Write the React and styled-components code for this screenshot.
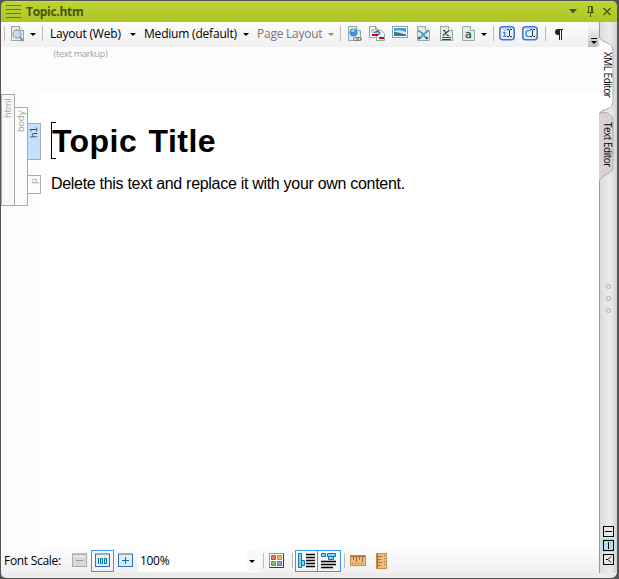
import React from "react";
import styled, { createGlobalStyle } from "styled-components";

const Global = createGlobalStyle`
  * { box-sizing: border-box; }
  html, body { margin: 0; background: #555557; overflow: hidden; }
  svg { display: block; flex: none; overflow: visible; }
`;

const Window = styled.div`
  width: 619px;
  height: 579px;
  padding: 1px 2px 1px 1px;
  background: #555557;
  display: flex;
  flex-direction: column;
  font-family: "Open Sans", sans-serif;
  font-size: 12px;
  color: #000;
`;

const TitleBar = styled.header`
  height: 21px;
  flex: none;
  display: flex;
  align-items: center;
  padding: 0 6px 0 5px;
  border-radius: 5px 5px 0 0;
  background: linear-gradient(#bdd333, #adc527);
  border-top: 1px solid #c8d950;
`;

const Title = styled.h1`
  margin: 0 auto 0 5px;
  font: bold 12px/20px "Open Sans", sans-serif;
  letter-spacing: -0.3px;
  color: #4a5608;
`;

const Body = styled.div`
  height: 556px;
  display: flex;
  background: #ebebeb;
  border-radius: 0 0 6px 5px;
  overflow: hidden;
`;

const Main = styled.main`
  width: 598px;
  display: flex;
  flex-direction: column;
`;

const Toolbar = styled.div`
  height: 25px;
  flex: none;
  display: flex;
  align-items: flex-start;
  background: linear-gradient(#fdfdfd, #f0f0f0);
`;

const Slot = styled.div`
  width: ${(p) => p.$w}px;
  flex: none;
  display: flex;
  align-items: center;
  height: 23px;
  padding-top: ${(p) => p.$drop || 0}px;
  padding-bottom: ${(p) => p.$lift || 0}px;
`;

const Label = styled.span`
  white-space: nowrap;
  font-size: 12px;
  line-height: 19px;
  letter-spacing: ${(p) => p.$track || 0}px;
  color: ${(p) => (p.$muted ? "#777" : "#000")};
`;

const Divider = styled.div`
  width: 1px;
  height: 15px;
  background: #bcbcbc;
`;

const Caret = styled.div`
  width: 0;
  height: 0;
  margin-top: 2px;
  border: 3px solid transparent;
  border-top: 3px solid ${(p) => (p.$muted ? "#888" : "#000")};
  border-bottom: 0;
`;

const Overflow = styled.div`
  width: 11px;
  height: 25px;
  margin-left: auto;
  border-radius: 0 0 4px 0;
  background: linear-gradient(#f6f6f6 20%, #bcbcbc);
  display: flex;
  align-items: flex-end;
  justify-content: center;
  padding-bottom: 3px;
`;

const Editor = styled.div`
  height: 502px;
  flex: none;
  display: flex;
  background: #fcfcfc;
`;

const Gutter = styled.div`
  width: 40px;
  padding-top: 47px;
  display: flex;
  align-items: flex-start;
`;

const TagColumn = styled.div`
  width: 14px;
  margin-right: -1px;
  margin-top: ${(p) => p.$top}px;
  display: flex;
  flex-direction: column;
  gap: 15px;
`;

const Tag = styled.div`
  height: ${(p) => p.$h}px;
  border: 1px solid #aaa;
  background: ${(p) => p.$bg || "#fcfcfc"};
  color: ${(p) => p.$color || "#aaa"};
  writing-mode: vertical-rl;
  transform: rotate(180deg);
  display: flex;
  justify-content: flex-end;
  align-items: center;
  padding-bottom: 3px;
  font: 9px/12px "DejaVu Sans", sans-serif;
  letter-spacing: -0.25px;
`;

const Page = styled.div`
  width: 558px;
`;

const Markup = styled.div`
  height: 45px;
  padding: 0 0 0 12px;
  font: 9px/14px "DejaVu Sans", sans-serif;
  letter-spacing: -0.57px;
  color: #aaa;
`;

const Paper = styled.div`
  height: 457px;
  background: #fff;
  padding: 30px 0 0 10px;
  font-family: "Liberation Sans", Arial, sans-serif;
`;

const HeadingRow = styled.div`
  height: 37px;
  display: flex;
  align-items: flex-start;
`;

const Bracket = styled.div`
  width: 5px;
  height: 37px;
  margin-right: -4px;
  border: 1px solid #000;
  border-right: 0;
`;

const Heading = styled.h2`
  margin: 1px 0 0;
  font: bold 32px/37px "Liberation Sans", Arial, sans-serif;
  letter-spacing: 0.45px;
  word-spacing: 2px;
  white-space: nowrap;
`;

const Paragraph = styled.p`
  margin: 15px 0 0;
  font-size: 16px;
  line-height: 19px;
  letter-spacing: -0.3px;
  white-space: nowrap;
`;

const StatusBar = styled.footer`
  height: 24px;
  flex: none;
  display: flex;
  align-items: flex-start;
  background: linear-gradient(#fcfcfc, #f0f0f0);
  padding-left: 3px;
`;

const Toggle = styled.div`
  width: ${(p) => p.$w || 23}px;
  height: 22px;
  margin-top: 1px;
  margin-right: ${(p) => p.$mr || 0}px;
  border: 1px solid ${(p) => (p.$on ? "#3399ff" : "transparent")};
  display: flex;
  align-items: flex-start;
  justify-content: center;
  padding-top: 2px;
  flex: none;
`;

const ScaleField = styled.div`
  width: 122px;
  height: 23px;
  padding-left: 2px;
  background: #fff;
  display: flex;
  align-items: center;
  margin-right: 3px;
`;

const ScaleDrop = styled.div`
  width: 13px;
  height: 21px;
  margin-left: auto;
  padding-right: 3px;
  background: #f9f9f9;
  display: flex;
  align-items: center;
  justify-content: center;
`;

const Rail = styled.aside`
  width: 18px;
  height: 551px;
  border-left: 1px solid #999;
  background: linear-gradient(90deg, #dcdcdc, #ececec 60%, #d2d2d2);
  display: flex;
  flex-direction: column;
`;

const TabStack = styled.div`
  height: 262px;
  flex: none;
  display: grid;
  grid-template-columns: 17px;
  grid-template-rows: 91px 171px;
`;

const Tab = styled.div`
  writing-mode: vertical-rl;
  position: relative;
  padding-top: ${(p) => p.$pad}px;
  padding-right: 2px;
  font: 10px/15px "Open Sans", sans-serif;
  letter-spacing: ${(p) => p.$track}px;
  white-space: nowrap;
  color: #000;
  z-index: ${(p) => p.$z};
`;

const TabShape = styled.svg`
  position: absolute;
  left: -1px;
  top: ${(p) => p.$top}px;
  z-index: -1;
`;

const Grips = styled.div`
  padding-left: 6px;
  display: flex;
  flex-direction: column;
  gap: 7px;
`;

const Grip = styled.div`
  width: 5px;
  height: 5px;
  border: 1px solid #aaa;
  border-radius: 50%;
`;

const SplitModes = styled.div`
  margin-top: auto;
  padding: 0 0 7px 1px;
  display: flex;
  flex-direction: column;
`;

const SplitMode = styled.div`
  width: 14px;
  height: 14px;
  padding: 2px 0 0 2px;
  background: ${(p) => (p.$on ? "#b0e0e6" : "transparent")};
`;

const Doc = ({ children }) => (
  <svg width="13" height="15" viewBox="0 0 13 15">
    <path d="M.5.5h8l4 4v10H.5z" fill="#e4ece9" stroke="#91aaa5" />
    <path d="M8.5.5v4h4" fill="#fff" stroke="#91aaa5" />
    {children}
  </svg>
);

const MenuIcon = () => (
  <svg width="15" height="14" viewBox="0 0 15 14">
    <path d="M0 .5h15M0 4.5h15M0 8.5h15M0 12.5h15" stroke="#68761a" />
  </svg>
);

const SearchDoc = () => (
  <Doc>
    <circle cx="6" cy="8" r="4" fill="#c9dbea" stroke="#9eabb0" strokeWidth="1.4" />
    <path d="M9 11l3 4" stroke="#77858a" strokeWidth="2" />
  </Doc>
);

const LinkDoc = () => (
  <Doc>
    <circle cx="5.500" cy="6.500" r="4" fill="#3d93d6" />
    <path d="M3 5.500q1-3 4-2Q7 7 3 5.500" fill="#a2d7f5" />
    <rect x="5.500" y="11.500" width="5" height="3" rx="1.500" fill="#eee" stroke="#81818a" />
    <rect x="8.500" y="11.500" width="5" height="3" rx="1.500" fill="none" stroke="#81818a" />
  </Doc>
);

const CrossRefDocs = () => (
  <svg width="17" height="15" viewBox="0 0 17 15">
    <path d="M.5.5h6l3 3v8h-9z" fill="#f2f6f4" stroke="#91aaa5" />
    <path d="M6.5.5v3h3M2 4h4M2 6h3" fill="none" stroke="#91aaa5" />
    <path d="M7.5 4.500h5l3 3v7h-8z" fill="#f2f6f4" stroke="#91aaa5" />
    <path d="M5 7q3-3 6 0M9 5l2 2-2 2" fill="none" stroke="#3864c4" strokeWidth="1.200" />
    <path d="M3 9h6M10 12h5" stroke="#d70000" strokeWidth="2" />
  </svg>
);

const PictureIcon = () => (
  <svg width="16" height="12" viewBox="0 0 16 12">
    <rect x=".5" y=".5" width="15" height="11" fill="#fff" stroke="#8aa09f" />
    <path d="M2 2h12v8H2z" fill="#4c98dc" />
    <path d="M2 5q5-2 12 1v2H2z" fill="#d5eff8" />
    <path d="M2 6q5 0 12 3v1H2z" fill="#337d82" />
  </svg>
);

const ShuffleDoc = () => (
  <Doc>
    <path d="M1 4.500l4 2.500 5 6M11.500 4.500L7 8l-5 5" fill="none" stroke="#54a0b7" strokeWidth="2" />
    <path d="M1 12.500l2-1M11 12.500l-2-1" stroke="#3b6070" strokeWidth="2" />
  </Doc>
);

const VariableDoc = () => (
  <Doc>
    <path d="M3 4.500h1.500l3 5H9M9 4.500L3 9.500" fill="none" stroke="#3c4443" strokeWidth="1.200" />
    <path d="M2 11.500h9M2 13.500h9" stroke="#3c4443" />
  </Doc>
);

const LetterDoc = () => (
  <Doc>
    <text x="6.300" y="12" textAnchor="middle" fontFamily="DejaVu Sans" fontSize="11" fill="#303839" stroke="#505758" strokeWidth=".3">a</text>
  </Doc>
);

const InlineBadge = ({ letter }) => (
  <svg width="16" height="15" viewBox="0 0 16 15">
    <rect x=".8" y=".8" width="14.400" height="12.900" rx="3" fill="#e3f0ff" stroke="#4779c9" strokeWidth="1.600" />
    <path d="M3 2.500h10" stroke="#b5d1f6" />
    <text x="5.500" y="11" textAnchor="middle" fontFamily="DejaVu Sans Mono" fontSize="9.500" fill="#2e6cd0" stroke="#2e6cd0" strokeWidth=".2">{letter}</text>
    <path d="M8 3.500h2M11 3.500h2M10.500 4v6M8 10.500h2M11 10.500h2" stroke="#333" />
  </svg>
);

const Pilcrow = () => (
  <svg width="9" height="11" viewBox="0 0 9 11">
    <path d="M4 0H3Q0 0 0 3t3 3h1z" fill="#222" />
    <path d="M3 .5h5M4.500 0v11M6.500 0v11" fill="none" stroke="#222" />
  </svg>
);

const ScaleButton = ({ kind }) => {
  const off = kind === "minus";
  const c = off ? "#aaa" : "#366bc9";
  return (
    <svg width="15" height="14" viewBox="0 0 15 14">
      <rect x=".5" y=".5" width="14" height="13" fill={off ? "#dadada" : "#d6efff"} stroke={c} />
      <path d="M0 .5h15M1 1.500h13" stroke={off ? "#bbb" : "#9cadbd"} />
      <path d="M1 3.500h13" stroke="#eee" />
      {kind === "full" && <path d="M3.500 5v6M5.500 5.500h2v5h-2zM9.500 5.500h2v5h-2z" fill="none" stroke="#087199" />}
      {kind === "minus" && <path d="M4 7.500h7" stroke="#999" />}
      {kind === "plus" && <path d="M4 7.500h7M7.500 4v7" stroke="#087199" />}
    </svg>
  );
};

const ColorGrid = () => (
  <svg width="15" height="15" viewBox="0 0 15 15">
    <rect x=".5" y=".5" width="14" height="14" fill="#fff" stroke="#9292a2" />
    <path d="M14.500 1v13.500H1" fill="none" stroke="#34384f" />
    <path d="M2.500 2.500h4v4h-4z" fill="#f07070" stroke="#d54646" />
    <path d="M8.500 2.500h4v4h-4z" fill="#f4b73d" stroke="#d98b12" />
    <path d="M2.500 8.500h4v4h-4z" fill="#77c765" stroke="#43a33b" />
    <path d="M8.500 8.500h4v4h-4z" fill="#7da1e7" stroke="#4e76c6" />
  </svg>
);

const BlockBarsIcon = () => (
  <svg width="17" height="15" viewBox="0 0 17 15">
    <path d="M.5.5h3v14h-3zM3.500 7.500h3v5h-3z" fill="#83d6ee" stroke="#0877b8" />
    <path d="M8 1.500h9M8 4.500h9M8 7.500h9M8 10.500h9M8 13.500h9" stroke="#000" strokeWidth="1.300" />
  </svg>
);

const SpanBarsIcon = () => (
  <svg width="16" height="15" viewBox="0 0 16 15">
    <path d="M.5.5h4v3h-4zM6.500.5h8v3h-8zM7.500 3.500h5v3h-5z" fill="#83d6ee" stroke="#0877b8" />
    <path d="M0 8.500h15M0 11.500h15M0 14.500h12" stroke="#000" strokeWidth="1.300" />
  </svg>
);

const RulerH = () => (
  <svg width="16" height="11" viewBox="0 0 16 11">
    <rect x=".5" y=".5" width="15" height="10" fill="#edbd83" stroke="#c88c50" />
    <path d="M1 1.500h14M3.500 2v3M6.500 2v5M9.500 2v3M12.500 2v5M2 8.500h1M5 8.500h1M8 8.500h1M11 8.500h1" stroke="#a46935" />
  </svg>
);

const RulerV = () => (
  <svg width="11" height="16" viewBox="0 0 11 16">
    <rect x=".5" y=".5" width="10" height="15" fill="#edbd83" stroke="#c88c50" />
    <path d="M1.500 1v14M2 3.500h4M2 6.500h3M2 9.500h4M2 12.500h3M8.500 2v1M8.500 5v1M8.500 8v1M8.500 11v1" stroke="#a46935" />
  </svg>
);

const splitPaths = ["M2 5.500h7", "M5.500 2v7", "M8 2.500L5 5.500 8 8.500M5 5.500H3"];

const SplitIcon = ({ d }) => (
  <svg width="11" height="11" viewBox="0 0 11 11">
    <rect x=".5" y=".5" width="10" height="10" fill="none" stroke="#000" />
    <path d={d} fill="none" stroke="#000" />
  </svg>
);

export default function App() {
  return (
    <>
      <Global />
      <Window>
        <TitleBar>
          <MenuIcon />
          <Title>Topic.htm</Title>
          <svg width="44" height="12" viewBox="0 0 44 12">
            <path d="M2 3h8L6 7.500z" fill="#4a5608" />
            <path d="M21.500 6V.5h4V6M24.500 0v6M20 6.500h7M23.500 7v4" fill="none" stroke="#4a5608" />
            <path d="M36.500 2l7 7M43.500 2l-7 7" stroke="#4a5608" strokeWidth="1.300" />
          </svg>
        </TitleBar>
        <Body>
          <Main>
            <Toolbar>
              <Slot $w={3} />
              <Slot $w={7}><Divider /></Slot>
              <Slot $w={19}><SearchDoc /></Slot>
              <Slot $w={12}><Caret /></Slot>
              <Slot $w={8}><Divider /></Slot>
              <Slot $w={80}><Label $track={-0.2}>Layout (Web)</Label></Slot>
              <Slot $w={14}><Caret /></Slot>
              <Slot $w={99}><Label $track={-0.2}>Medium (default)</Label></Slot>
              <Slot $w={14}><Caret /></Slot>
              <Slot $w={71}><Label $muted $track={-0.25}>Page Layout</Label></Slot>
              <Slot $w={12}><Caret $muted /></Slot>
              <Slot $w={8}><Divider /></Slot>
              <Slot $w={21}><LinkDoc /></Slot>
              <Slot $w={23}><CrossRefDocs /></Slot>
              <Slot $w={25} $lift={3}><PictureIcon /></Slot>
              <Slot $w={23}><ShuffleDoc /></Slot>
              <Slot $w={22}><VariableDoc /></Slot>
              <Slot $w={19}><LetterDoc /></Slot>
              <Slot $w={12}><Caret /></Slot>
              <Slot $w={6}><Divider /></Slot>
              <Slot $w={23}><InlineBadge letter="i" /></Slot>
              <Slot $w={23}><InlineBadge letter="C" /></Slot>
              <Slot $w={10}><Divider /></Slot>
              <Slot $w={9} $drop={2}><Pilcrow /></Slot>
              <Overflow>
                <svg width="6" height="6" viewBox="0 0 6 6"><path d="M0 .5h6" stroke="#000" /><path d="M0 3h6L3 6z" /></svg>
              </Overflow>
            </Toolbar>
            <Editor>
              <Gutter>
                <TagColumn $top={0}><Tag $h={112} $bg="#f7f7f7">html</Tag></TagColumn>
                <TagColumn $top={13}><Tag $h={99}>body</Tag></TagColumn>
                <TagColumn $top={29}>
                  <Tag $h={37} $bg="#c2e0ff" $color="#344756">h1</Tag>
                  <Tag $h={19}>p</Tag>
                </TagColumn>
              </Gutter>
              <Page>
                <Markup>(text markup)</Markup>
                <Paper>
                  <HeadingRow><Bracket /><Heading>Topic Title</Heading></HeadingRow>
                  <Paragraph>Delete this text and replace it with your own content.</Paragraph>
                </Paper>
              </Page>
            </Editor>
            <StatusBar>
              <Slot $w={64}><Label $track={-0.3}>Font Scale:</Label></Slot>
              <Toggle><ScaleButton kind="minus" /></Toggle>
              <Toggle $on><ScaleButton kind="full" /></Toggle>
              <Toggle $mr={1}><ScaleButton kind="plus" /></Toggle>
              <ScaleField><Label $track={-0.3}>100%</Label><ScaleDrop><Caret /></ScaleDrop></ScaleField>
              <Slot $w={6}><Divider /></Slot>
              <Slot $w={23}><ColorGrid /></Slot>
              <Slot $w={3}><Divider /></Slot>
              <Toggle $on $mr={-1}><BlockBarsIcon /></Toggle>
              <Toggle $on $w={24} $mr={3}><SpanBarsIcon /></Toggle>
              <Slot $w={6}><Divider /></Slot>
              <Slot $w={26}><RulerH /></Slot>
              <Slot $w={11} $drop={1}><RulerV /></Slot>
            </StatusBar>
          </Main>
          <Rail>
            <TabStack>
              <Tab $pad={30} $z={2} $track={-0.5}>
                <TabShape $top={15} width="17" height="78" viewBox="0 0 17 78">
                  <path d="M0 0Q2 4 8 6Q14 8 14 14V64Q14 70 8 72Q2 73 0 77" fill="#fff" stroke="#aaa" />
                </TabShape>
                XML Editor
              </Tab>
              <Tab $pad={9} $z={1} $track={-0.5}>
                <TabShape $top={-1} width="17" height="70" viewBox="0 0 17 70">
                  <path d="M0 2Q3-1 8 1Q14 3 14 9V54Q14 60 8 62Q2 65 0 69" fill="#d8d2d4" stroke="#aaa" />
                </TabShape>
                Text Editor
              </Tab>
            </TabStack>
            <Grips><Grip /><Grip /><Grip /></Grips>
            <SplitModes>
              {splitPaths.map((d, i) => <SplitMode key={d} $on={i === 1}><SplitIcon d={d} /></SplitMode>)}
            </SplitModes>
          </Rail>
        </Body>
      </Window>
    </>
  );
}
